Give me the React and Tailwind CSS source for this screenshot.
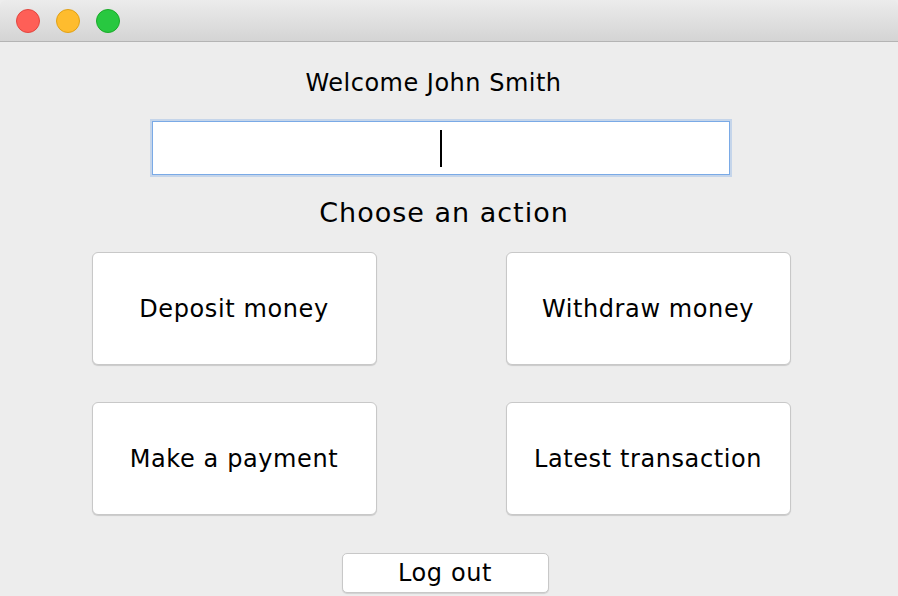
import React from "react";

const font = { fontFamily: '"DejaVu Sans", "Liberation Sans", sans-serif' };

const ActionButton = ({ label }) => (
  <button className="w-[285px] h-[113px] bg-white rounded-[6px] border border-[#c8c8c8] shadow-[0_1px_1px_rgba(0,0,0,0.15)] text-[24px] tracking-[0.6px] text-black">
    {label}
  </button>
);

const App = () => {
  return (
    <div
      className="w-[898px] h-[596px] bg-[#ededed] overflow-hidden flex flex-col"
      style={font}
    >
      <div className="h-[42px] shrink-0 bg-gradient-to-b from-[#ececec] to-[#d4d4d4] border-b border-[#b4b4b4] rounded-t-[6px] flex items-center gap-[16px] pl-[16px]">
        <span className="w-[24px] h-[24px] rounded-full bg-[#fe5f57] border border-[#e2463f]" />
        <span className="w-[24px] h-[24px] rounded-full bg-[#febc2e] border border-[#e1a116]" />
        <span className="w-[24px] h-[24px] rounded-full bg-[#28c840] border border-[#1aab29]" />
      </div>

      <div className="flex flex-col items-center pr-[16px]">
        <div className="mt-[27px] mr-[15px] h-[28px] text-[24px] leading-[28px] tracking-[0.5px] text-black">
          Welcome John Smith
        </div>

        <div className="mt-[24px] w-[578px] h-[54px] bg-white border border-[#7aaae6] shadow-[0_0_0_2px_rgba(122,170,230,0.35)] flex items-center justify-center">
          <span className="w-[2px] h-[37px] bg-black" />
        </div>

        <div className="mt-[22px] ml-[6px] h-[32px] text-[27px] leading-[32px] tracking-[1px] text-black">
          Choose an action
        </div>

        <div className="mt-[23px] grid grid-cols-2 gap-x-[129px] gap-y-[37px]">
          <ActionButton label="Deposit money" />
          <ActionButton label="Withdraw money" />
          <ActionButton label="Make a payment" />
          <ActionButton label="Latest transaction" />
        </div>

        <button className="mt-[38px] ml-[8px] w-[207px] h-[40px] bg-white rounded-[5px] border border-[#c8c8c8] shadow-[0_1px_1px_rgba(0,0,0,0.12)] text-[24px] leading-[36px] tracking-[0.6px] text-black">
          Log out
        </button>
      </div>
    </div>
  );
};

export default App;
